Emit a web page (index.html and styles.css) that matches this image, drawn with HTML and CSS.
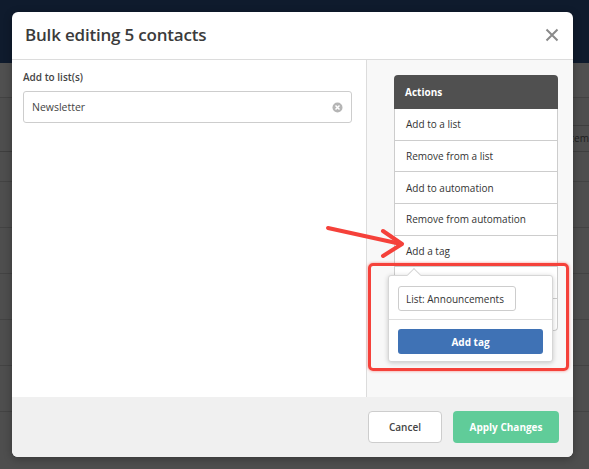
FILE: index.html
```html
<!DOCTYPE html>
<html>
<head>
<meta charset="utf-8">
<link rel="stylesheet" href="styles.css">
</head>
<body>
<div class="bg">
  <div class="bg-top"></div>
  <div class="bg-row r1"></div>
  <div class="bg-row r2"><span class="bg-field">Announcem</span></div>
  <div class="bg-row r3"></div>
  <div class="bg-row r4"></div>
  <div class="bg-row r4"></div>
  <div class="bg-row r4"></div>
  <div class="bg-row r4"></div>
  <div class="bg-row r4"></div>
</div>

<div class="modal">
  <div class="modal-header">
    <h1 class="title">Bulk editing 5 contacts</h1>
    <svg class="close" width="14" height="14" viewBox="0 0 14 14"><path d="M1.5 1.5 L12.5 12.5 M12.5 1.5 L1.5 12.5" stroke="#8a8a8a" stroke-width="2" fill="none"/></svg>
  </div>
  <div class="modal-body">
    <div class="left">
      <div class="label">Add to list(s)</div>
      <div class="select">
        <span>Newsletter</span>
        <svg class="clear" width="11" height="11" viewBox="0 0 11 11"><circle cx="5.5" cy="5.5" r="5" fill="#b5b5b5"/><path d="M3.5 3.5 L7.5 7.5 M7.5 3.5 L3.5 7.5" stroke="#fff" stroke-width="1.5"/></svg>
      </div>
    </div>
    <div class="right">
      <div class="actions">
        <div class="actions-head">Actions</div>
        <div class="item">Add to a list</div>
        <div class="item">Remove from a list</div>
        <div class="item">Add to automation</div>
        <div class="item">Remove from automation</div>
        <div class="item">Add a tag</div>
        <div class="item"></div>
        <div class="item"></div>
      </div>
      <div class="popover">
        <div class="pop-top">
          <div class="tag-input">List: Announcements</div>
        </div>
        <div class="pop-bottom">
          <button class="btn-tag">Add tag</button>
        </div>
      </div>
      <div class="highlight"></div>
    </div>
  </div>
  <div class="modal-footer">
    <button class="btn btn-cancel">Cancel</button>
    <button class="btn btn-apply">Apply Changes</button>
  </div>
</div>

<svg class="arrow" width="100" height="40" viewBox="0 0 100 40">
  <g stroke="#f5413a" stroke-width="4" stroke-linecap="round" fill="none" stroke-linejoin="round">
    <path d="M5 7 L78 23"/>
    <path d="M60 10 L79 23 L60 35"/>
  </g>
</svg>
</body>
</html>
```
FILE: styles.css
```css
* { box-sizing: border-box; }
html, body { margin: 0; padding: 0; }
body {
  width: 589px;
  height: 469px;
  overflow: hidden;
  position: relative;
  background: #4e4e4e;
  font-family: "Open Sans", "Liberation Sans", sans-serif;
  color: #333;
}
.bg { display: flex; flex-direction: column; }
.bg-top { height: 63px; background: #0f1b2d; }
.bg-row { border-bottom: 1px solid #434343; position: relative; }
.r1 { height: 35px; background: #505050; }
.r2 { height: 54px; border-bottom: 1px solid #3e3e3e; }
.r3 { height: 30px; }
.r4 { height: 46px; }
.bg-field {
  position: absolute;
  left: 520px;
  top: 27px;
  height: 27px;
  width: 69px;
  border-top: 1px solid #3f3f3f;
  border-bottom: 1px solid #3f3f3f;
  font-size: 10px;
  line-height: 25px;
  color: #1e1e1e;
  text-align: right;
  overflow: hidden;
  white-space: nowrap;
}

.modal {
  position: absolute;
  left: 12px;
  top: 12px;
  width: 561px;
  height: 445px;
  background: #fff;
  border-radius: 6px;
  overflow: hidden;
  display: flex;
  flex-direction: column;
  box-shadow: 0 2px 8px rgba(0,0,0,0.3);
}
.modal-header {
  height: 48px;
  border-bottom: 1px solid #dcdcdc;
  display: flex;
  align-items: center;
  justify-content: space-between;
  padding: 0 14px 2px 13px;
  flex: none;
}
.title {
  margin: 0;
  font-size: 17px;
  font-weight: 600;
  color: #3b3b3b;
  letter-spacing: -0.2px;
}

.modal-body { flex: 1; display: flex; min-height: 0; }
.left { width: 354px; padding: 10px 14px 10px 11px; flex: none; }
.label { font-size: 10px; font-weight: 600; color: #444; margin-bottom: 7px; }
.select {
  height: 32px;
  border: 1px solid #cdcdcd;
  border-radius: 3px;
  display: flex;
  align-items: center;
  justify-content: space-between;
  padding: 0 8px 0 8px;
  font-size: 10.5px;
  color: #444;
}
.right {
  flex: 1;
  background: #f8f8f8;
  border-left: 1px solid #dcdcdc;
  padding: 15px 14px 0 27px;
  position: relative;
}
.actions { width: 164px; }
.actions-head {
  height: 34px;
  background: #505050;
  border-radius: 4px 4px 0 0;
  color: #fff;
  font-size: 10px;
  font-weight: 700;
  display: flex;
  align-items: center;
  padding-left: 11px;
}
.item {
  height: 31.7px;
  background: #fff;
  border: 1px solid #cdcdcd;
  border-top: none;
  font-size: 10px;
  color: #333;
  display: flex;
  align-items: center;
  padding-left: 11px;
}
.item:last-child { border-radius: 0 0 4px 4px; }

.popover {
  position: absolute;
  left: 21px;
  top: 215px;
  width: 165px;
  background: #fff;
  border: 1px solid #d6d6d6;
  border-radius: 3px;
  box-shadow: 0 1px 5px rgba(0,0,0,0.2);
}
.popover::before {
  content: "";
  position: absolute;
  left: 20px;
  top: -6px;
  width: 9px;
  height: 9px;
  background: #fff;
  border-left: 1px solid #d6d6d6;
  border-top: 1px solid #d6d6d6;
  transform: rotate(45deg);
}
.pop-top { padding: 10px 9px 8px; border-bottom: 1px solid #dedede; }
.tag-input {
  width: 118px;
  height: 25px;
  border: 1px solid #cdcdcd;
  border-radius: 3px;
  font-size: 10px;
  color: #333;
  display: flex;
  align-items: center;
  padding-left: 7px;
  white-space: nowrap;
}
.pop-bottom { padding: 9px 9px 7px; }
.btn-tag {
  width: 145px;
  height: 25px;
  border: none;
  border-radius: 3px;
  background: #3f72b5;
  color: #fff;
  font-family: "Open Sans", "Liberation Sans", sans-serif;
  font-size: 10px;
  font-weight: 700;
  display: block;
}
.highlight {
  position: absolute;
  left: 1px;
  top: 203px;
  width: 201px;
  height: 108px;
  border: 3px solid #f5413a;
  border-radius: 5px;
  box-shadow: 0 0 3px rgba(245,65,58,0.6);
}

.modal-footer {
  height: 60px;
  flex: none;
  background: #f0f0f0;
  display: flex;
  align-items: center;
  justify-content: flex-end;
  gap: 11px;
  padding: 0 14px 1px 0;
}
.btn {
  height: 32px;
  border-radius: 4px;
  font-family: "Open Sans", "Liberation Sans", sans-serif;
  font-size: 10px;
  font-weight: 600;
}
.btn-cancel {
  width: 74px;
  background: #fff;
  border: 1px solid #cdcdcd;
  color: #444;
}
.btn-apply {
  width: 106px;
  background: #60cc99;
  border: none;
  color: #fff;
  font-weight: 700;
}
.arrow {
  position: absolute;
  left: 323px;
  top: 221px;
}
```
